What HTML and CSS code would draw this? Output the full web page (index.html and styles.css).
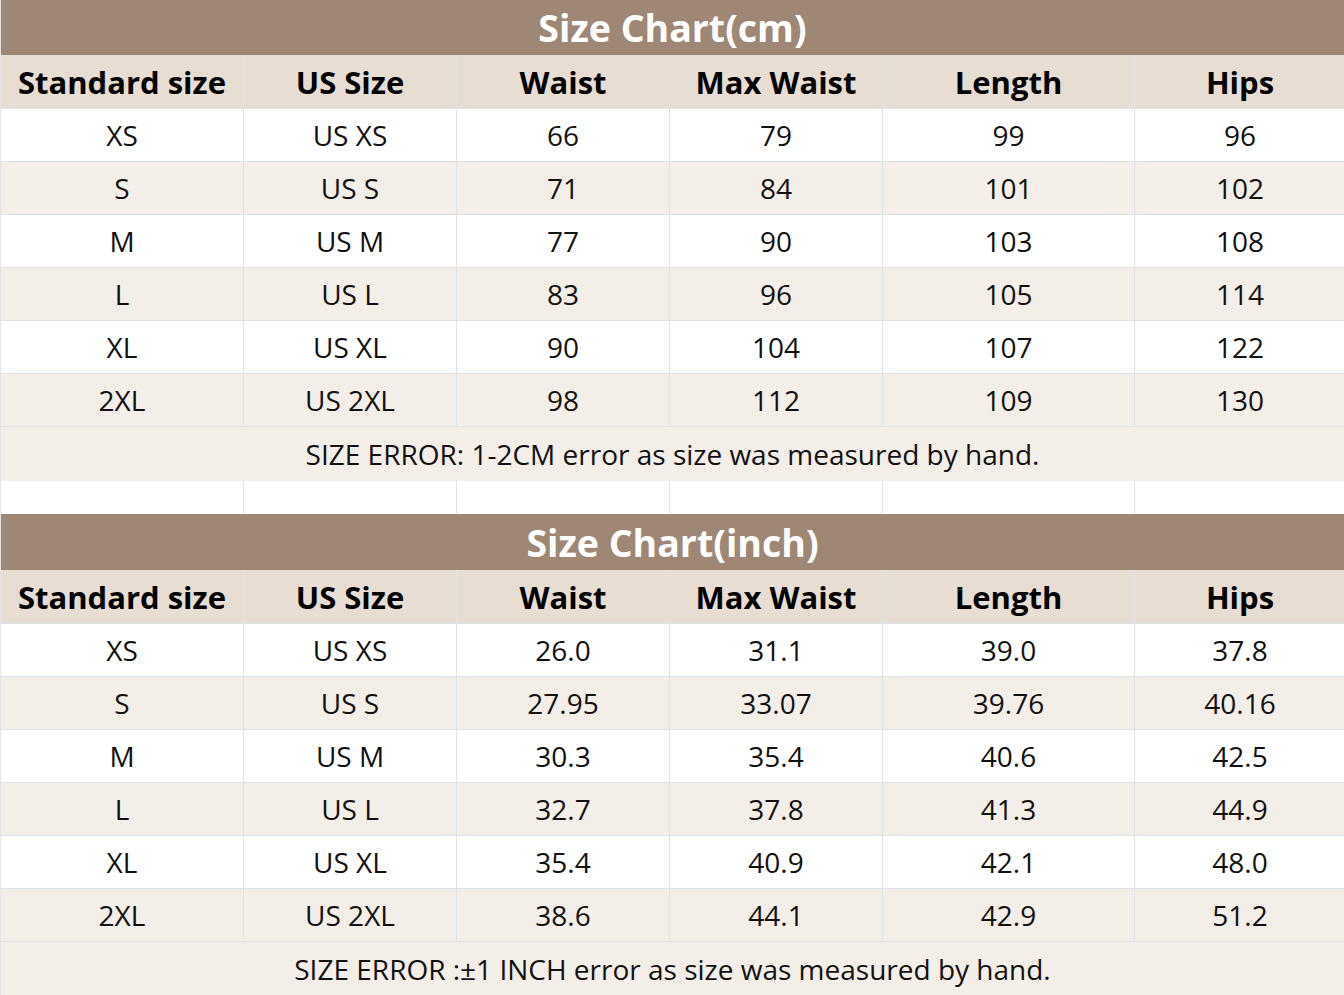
FILE: index.html
```html
<!DOCTYPE html>
<html>
<head>
<meta charset="utf-8">
<link rel="stylesheet" href="styles.css">
</head>
<body>
<div class="chart">
  <div class="title">Size Chart(cm)</div>
  <div class="row head">
    <div class="cell">Standard size</div><div class="cell">US Size</div><div class="cell">Waist</div><div class="cell">Max Waist</div><div class="cell">Length</div><div class="cell">Hips</div>
  </div>
  <div class="row">
    <div class="cell">XS</div><div class="cell">US XS</div><div class="cell">66</div><div class="cell">79</div><div class="cell">99</div><div class="cell">96</div>
  </div>
  <div class="row alt">
    <div class="cell">S</div><div class="cell">US S</div><div class="cell">71</div><div class="cell">84</div><div class="cell">101</div><div class="cell">102</div>
  </div>
  <div class="row">
    <div class="cell">M</div><div class="cell">US M</div><div class="cell">77</div><div class="cell">90</div><div class="cell">103</div><div class="cell">108</div>
  </div>
  <div class="row alt">
    <div class="cell">L</div><div class="cell">US L</div><div class="cell">83</div><div class="cell">96</div><div class="cell">105</div><div class="cell">114</div>
  </div>
  <div class="row">
    <div class="cell">XL</div><div class="cell">US XL</div><div class="cell">90</div><div class="cell">104</div><div class="cell">107</div><div class="cell">122</div>
  </div>
  <div class="row alt">
    <div class="cell">2XL</div><div class="cell">US 2XL</div><div class="cell">98</div><div class="cell">112</div><div class="cell">109</div><div class="cell">130</div>
  </div>
  <div class="note">SIZE ERROR: 1-2CM error as size was measured by hand.</div>
  <div class="row blank">
    <div class="cell"></div><div class="cell"></div><div class="cell"></div><div class="cell"></div><div class="cell"></div><div class="cell"></div>
  </div>
  <div class="title title2">Size Chart(inch)</div>
  <div class="row head">
    <div class="cell">Standard size</div><div class="cell">US Size</div><div class="cell">Waist</div><div class="cell">Max Waist</div><div class="cell">Length</div><div class="cell">Hips</div>
  </div>
  <div class="row">
    <div class="cell">XS</div><div class="cell">US XS</div><div class="cell">26.0</div><div class="cell">31.1</div><div class="cell">39.0</div><div class="cell">37.8</div>
  </div>
  <div class="row alt">
    <div class="cell">S</div><div class="cell">US S</div><div class="cell">27.95</div><div class="cell">33.07</div><div class="cell">39.76</div><div class="cell">40.16</div>
  </div>
  <div class="row">
    <div class="cell">M</div><div class="cell">US M</div><div class="cell">30.3</div><div class="cell">35.4</div><div class="cell">40.6</div><div class="cell">42.5</div>
  </div>
  <div class="row alt">
    <div class="cell">L</div><div class="cell">US L</div><div class="cell">32.7</div><div class="cell">37.8</div><div class="cell">41.3</div><div class="cell">44.9</div>
  </div>
  <div class="row">
    <div class="cell">XL</div><div class="cell">US XL</div><div class="cell">35.4</div><div class="cell">40.9</div><div class="cell">42.1</div><div class="cell">48.0</div>
  </div>
  <div class="row alt">
    <div class="cell">2XL</div><div class="cell">US 2XL</div><div class="cell">38.6</div><div class="cell">44.1</div><div class="cell">42.9</div><div class="cell">51.2</div>
  </div>
  <div class="note">SIZE ERROR :±1 INCH error as size was measured by hand.</div>
</div>
</body>
</html>
```
FILE: styles.css
```css
html, body {
  margin: 0;
  padding: 0;
  background: #ffffff;
}
.chart {
  width: 1344px;
  font-family: "Open Sans", "Noto Sans", sans-serif;
  color: #111111;
}
.title {
  height: 55px;
  box-sizing: border-box;
  background: #9e8774;
  color: #ffffff;
  font-weight: 700;
  font-size: 37.5px;
  display: flex;
  align-items: center;
  justify-content: center;
  border-left: 1px solid #e4e4e4;
}
.title2 {
  height: 56px;
}
.row {
  display: grid;
  grid-template-columns: 243px 213px 213px 213px 252px 210px;
  height: 53px;
  box-sizing: border-box;
  border-bottom: 1px solid #dfe3e8;
  background: #ffffff;
  border-left: 1px solid #e4e4e4;
}
.row.alt {
  background: #f4eee8;
}
.row.head {
  background: #e8ddd2;
  height: 54px;
  font-weight: 700;
  color: #000000;
}
.cell {
  display: flex;
  align-items: center;
  justify-content: center;
  border-right: 1px solid #dfe3e8;
  font-size: 28px;
  white-space: nowrap;
}
.row.head .cell {
  font-size: 31px;
}
.row .cell:last-child {
  border-right: none;
}
.row.blank {
  height: 33px;
  border-bottom: none;
}
.note {
  height: 54px;
  background: #f4eee8;
  display: flex;
  align-items: center;
  justify-content: center;
  font-size: 28px;
  border-left: 1px solid #e4e4e4;
}
```
